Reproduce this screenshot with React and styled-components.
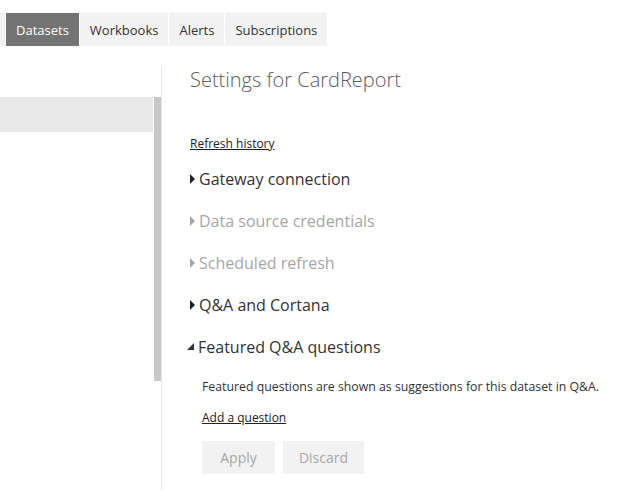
import React from 'react';
import styled, { createGlobalStyle } from 'styled-components';

const GlobalStyle = createGlobalStyle`
	body {
		margin: 0;
		background: #fff;
		font-family: "Open Sans", "Liberation Sans", sans-serif;
		color: #333;
	}
`;

const tabs = ['Datasets', 'Workbooks', 'Alerts', 'Subscriptions'];

const sections = [
	{ title: 'Gateway connection' },
	{ title: 'Data source credentials', disabled: true },
	{ title: 'Scheduled refresh', disabled: true },
	{ title: 'Q&A and Cortana' },
	{ title: 'Featured Q&A questions', open: true },
];

const Arrow = ({ open, disabled }) => (
	<ArrowBox>
		{open ? (
			<svg width="8" height="8" viewBox="0 0 8 8">
				<polygon points="7,0 7,7 0,7" fill="#333" />
			</svg>
		) : (
			<svg width="6" height="10" viewBox="0 0 6 10">
				<polygon points="0,0 5,5 0,10" fill={disabled ? '#a6a6a6' : '#222'} />
			</svg>
		)}
	</ArrowBox>
);

export default function App() {
	return (
		<Page>
			<GlobalStyle />
			<TabBar>
				<Sliver />
				{tabs.map((t, i) => (
					<Tab key={t} active={i === 0}>{t}</Tab>
				))}
			</TabBar>
			<Body>
				<LeftPanel>
					<SelectedRow />
					<ScrollThumb />
				</LeftPanel>
				<Content>
					<Heading>Settings for CardReport</Heading>
					<TextLink>Refresh history</TextLink>
					<SectionList>
						{sections.map(s => (
							<SectionRow key={s.title} disabled={s.disabled} open={s.open}>
								<Arrow open={s.open} disabled={s.disabled} />
								{s.title}
							</SectionRow>
						))}
					</SectionList>
					<Expanded>
						<Description>Featured questions are shown as suggestions for this dataset in Q&amp;A.</Description>
						<TextLink>Add a question</TextLink>
						<Buttons>
							<Button width={73}>Apply</Button>
							<Button width={81}>Discard</Button>
						</Buttons>
					</Expanded>
				</Content>
			</Body>
		</Page>
	);
}

const Page = styled.div`
	width: 634px;
	height: 499px;
	overflow: hidden;
`;

const TabBar = styled.div`
	display: flex;
	gap: 1px;
	padding-top: 13px;
`;

const Sliver = styled.div`
	width: 5px;
	height: 33px;
	background: #f2f2f2;
`;

const Tab = styled.div`
	height: 33px;
	padding: 0 10px;
	display: flex;
	align-items: center;
	font-size: 13px;
	background: ${p => (p.active ? '#737373' : '#f2f2f2')};
	color: ${p => (p.active ? '#fff' : '#333')};
`;

const Body = styled.div`
	display: flex;
	margin-top: 21px;
`;

const LeftPanel = styled.div`
	position: relative;
	width: 162px;
	height: 423px;
	border-right: 1px solid #e6e6e6;
	padding-top: 30px;
	box-sizing: border-box;
`;

const SelectedRow = styled.div`
	width: 153px;
	height: 35px;
	background: #e8e8e8;
`;

const ScrollThumb = styled.div`
	position: absolute;
	top: 30px;
	left: 154px;
	width: 7px;
	height: 284px;
	background: #c8c8c8;
`;

const Content = styled.div`
	display: flex;
	flex-direction: column;
	align-items: flex-start;
	padding-left: 28px;
`;

const Heading = styled.h1`
	margin: 0;
	font-size: 20px;
	font-weight: 300;
	line-height: 26px;
	color: #5c5c5c;
	margin-bottom: 43px;
`;

const TextLink = styled.a`
	font-size: 12px;
	line-height: 16px;
	color: #222;
	text-decoration: underline;
	cursor: pointer;
`;

const SectionList = styled.div`
	margin-top: 6px;
`;

const SectionRow = styled.div`
	display: flex;
	align-items: center;
	height: 42px;
	font-size: 16px;
	color: ${p => (p.disabled ? '#a6a6a6' : '#333')};
	margin-left: ${p => (p.open ? '-3px' : '0')};
`;

const ArrowBox = styled.span`
	display: inline-flex;
	align-items: center;
	margin-right: 3px;
`;

const Expanded = styled.div`
	display: flex;
	flex-direction: column;
	align-items: flex-start;
	padding-left: 12px;
	margin-top: 11px;
`;

const Description = styled.p`
	margin: 0 0 15px;
	font-size: 12.3px;
	line-height: 16px;
	color: #333;
`;

const Buttons = styled.div`
	display: flex;
	gap: 8px;
	margin-top: 15px;
`;

const Button = styled.button`
	width: ${p => p.width}px;
	height: 33px;
	border: none;
	background: #f2f2f2;
	color: #a6a6a6;
	font-family: inherit;
	font-size: 14px;
	cursor: default;
`;
